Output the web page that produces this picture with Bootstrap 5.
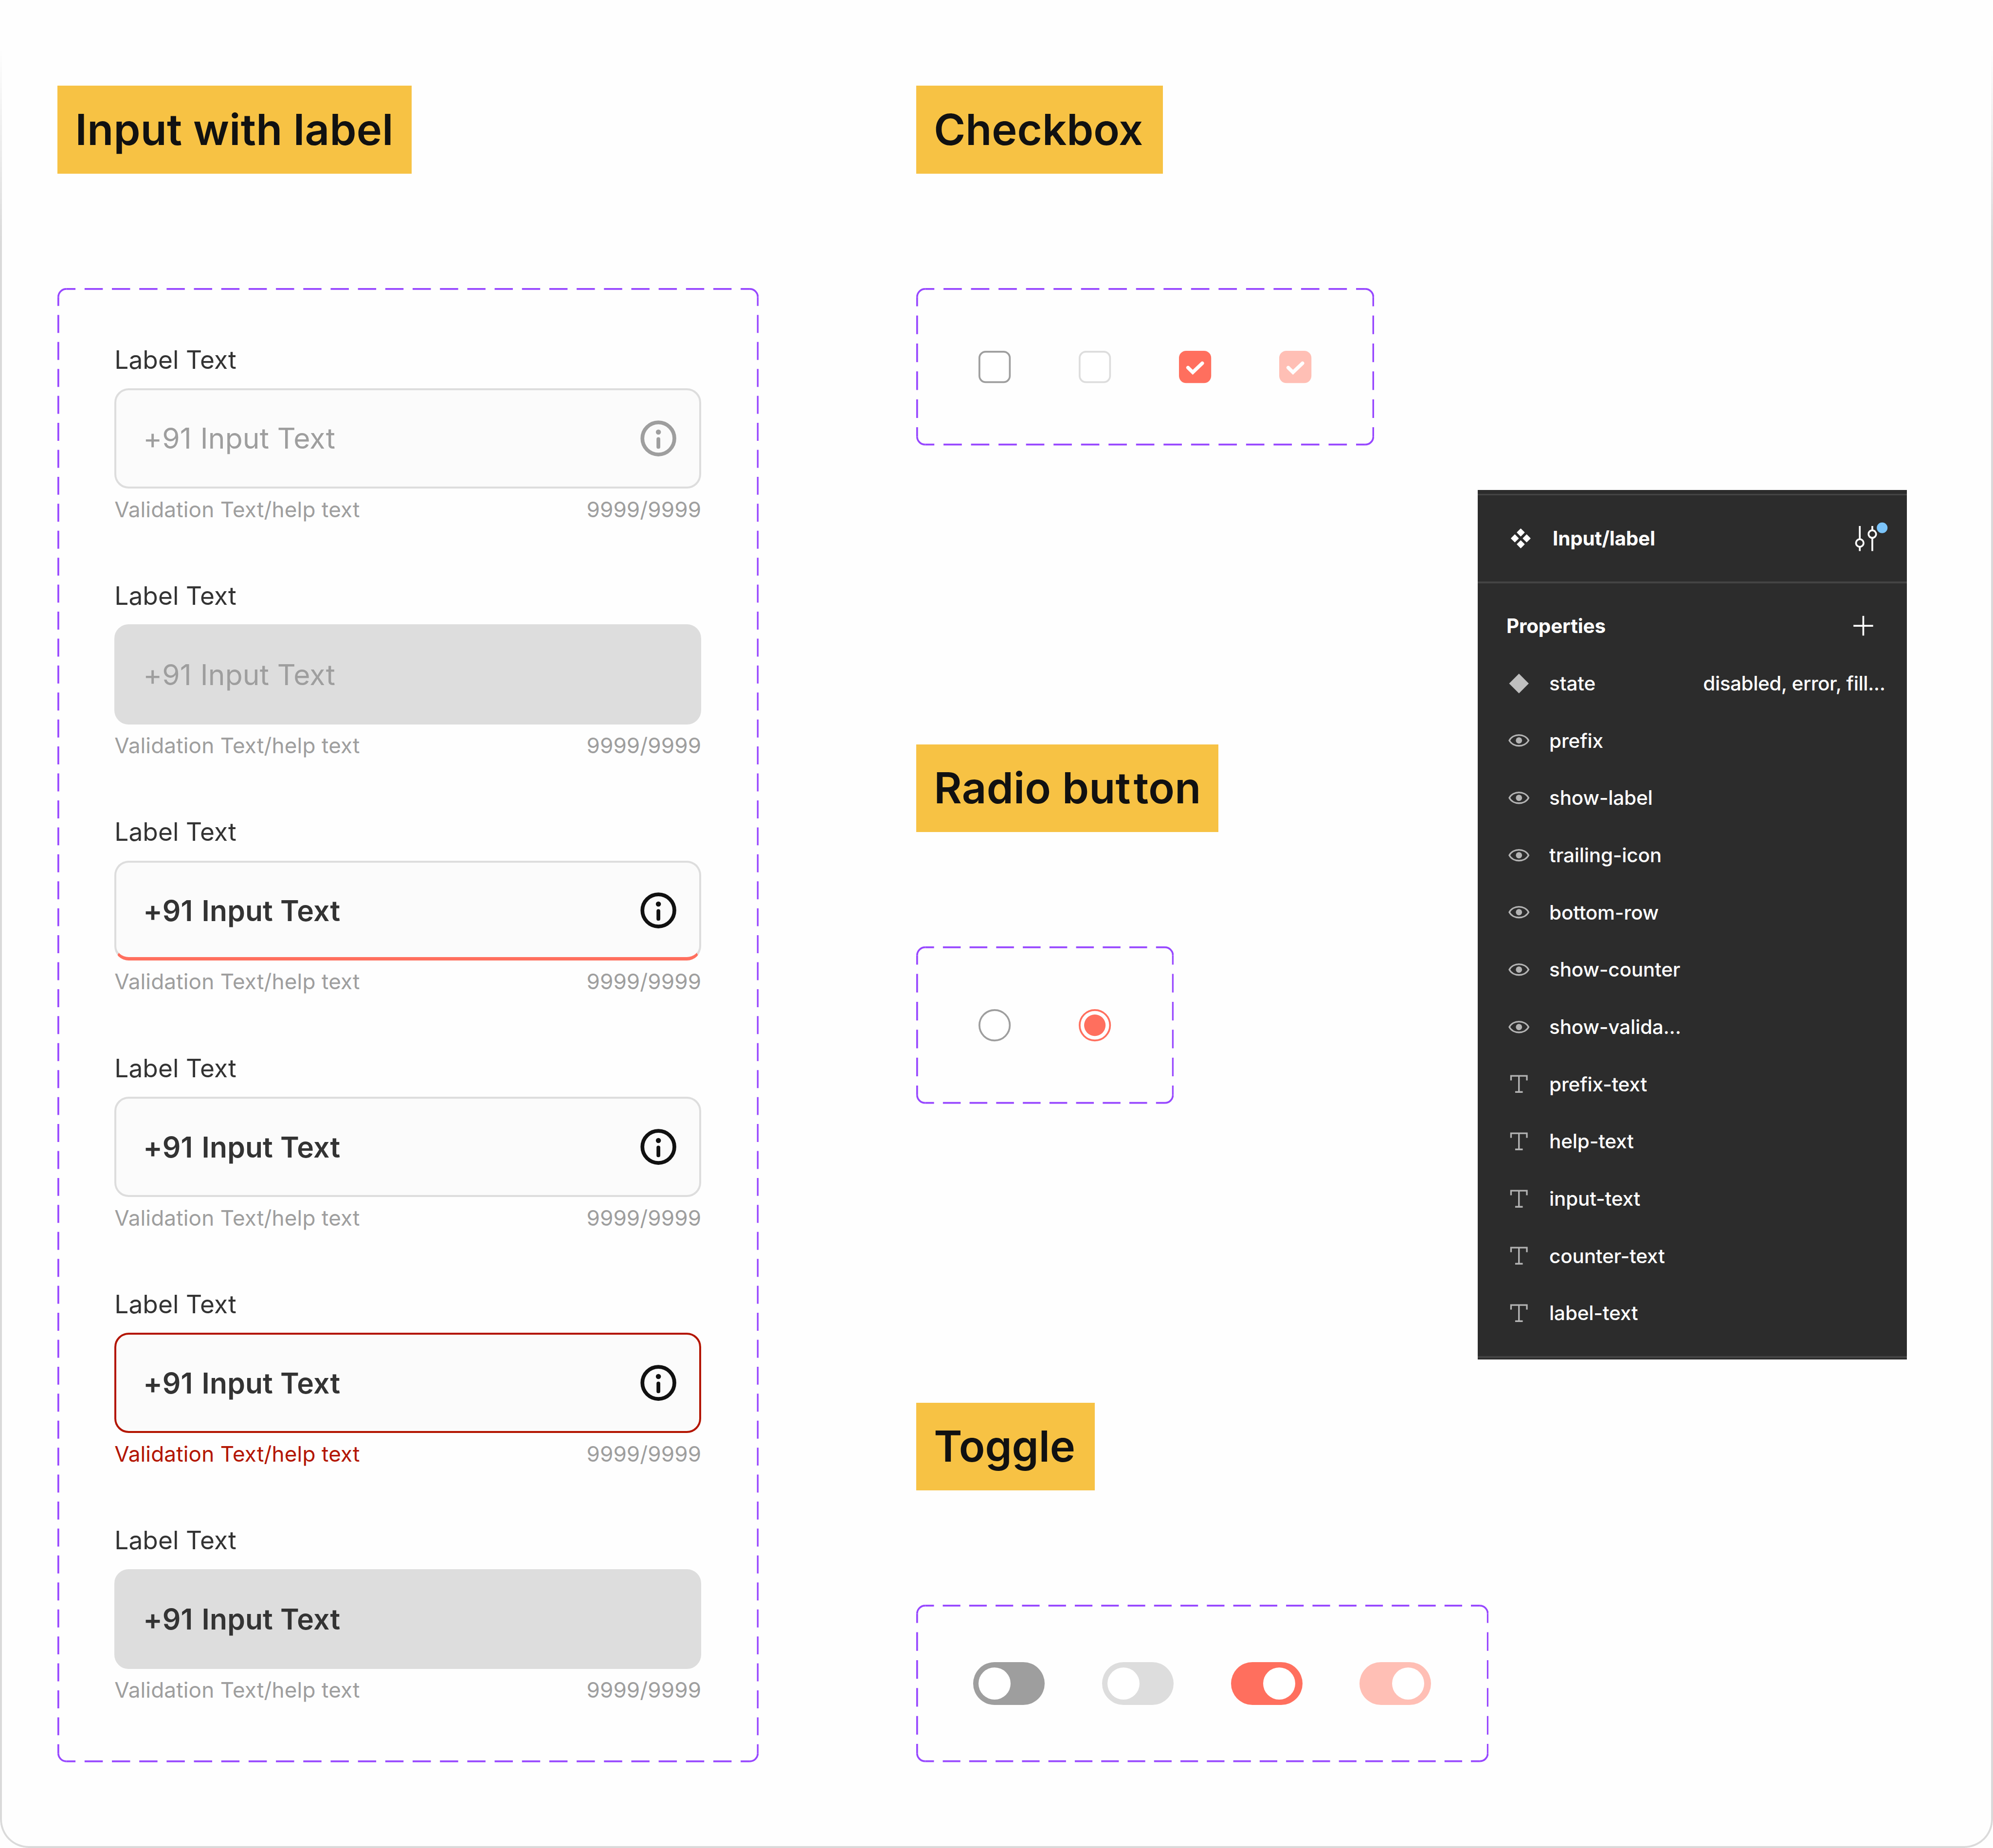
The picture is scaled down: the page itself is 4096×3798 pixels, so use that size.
<!DOCTYPE html>
<html lang="en">
<head>
<meta charset="utf-8">
<title>Form components</title>
<meta name="viewport" content="width=device-width, initial-scale=1">
<link href="https://cdn.jsdelivr.net/npm/bootstrap@5.3.0/dist/css/bootstrap.min.css" rel="stylesheet">
<style>
  /* 1rem = 16 design units, 1 design unit = --u */
  html { font-size: 58.8294px; }
  :root { --u: .0625rem; --hair: 4px; --gray: #9e9e9e; --line: #ddd; --coral: #ff6f5e; --coral-soft: #ffbfb5; --danger: #b31500; --ink: #333; }
  body { font-family: Inter, "Liberation Sans", sans-serif; background: #fefefe; color: var(--ink); line-height: 1; overflow: hidden; font-variant-ligatures: none; }
  .sheet { width: 4096px; height: 3798px; padding: calc(48*var(--u)) 0 0 calc(32*var(--u)); }
  .sheet-edge { position: absolute; inset: 0; border: var(--hair) solid #dadada; border-top: 0; border-radius: 0 0 1rem 1rem; pointer-events: none; -webkit-mask-image: linear-gradient(transparent 100px, #000 500px); mask-image: linear-gradient(transparent 100px, #000 500px); }
  .col-inputs { width: calc(480*var(--u)); }
  .col-controls { width: calc(314*var(--u)); }
  .section { height: calc(368*var(--u)); }
  .section-title { background: #f7c244; color: #111; font-size: 1.5rem; line-height: calc(29*var(--u)); font-weight: 600; padding: calc(10*var(--u)); margin: 0 0 4rem; letter-spacing: 0; white-space: nowrap; }
  .title-input { width: calc(198*var(--u)); letter-spacing: .28px; }
  .title-check { width: calc(138*var(--u)); }
  .title-radio { width: calc(169*var(--u)); letter-spacing: .28px; }
  .title-radio span { letter-spacing: 6px; }
  .title-toggle { width: calc(100*var(--u)); }
  .frame { position: relative; padding: 2rem; flex: none; }
  .frame-dash { position: absolute; inset: 0; width: 100%; height: 100%; fill: none; stroke: #9747ff; stroke-width: 4; }
  .frame-inputs { width: calc(392*var(--u)); height: calc(824*var(--u)); }

  .field { height: calc(100*var(--u)); }
  .field-label { font-size: calc(14*var(--u)); line-height: 1rem; letter-spacing: .02px; margin-bottom: .5rem; }
  .field-box { height: 3.5rem; border: var(--hair) solid var(--line); border-radius: .5rem; background: #fbfbfb; padding: 0 calc(12*var(--u) - var(--hair)) 0 calc(1rem - var(--hair)); color: var(--gray); font-size: 1rem; letter-spacing: calc(.035*var(--u)); gap: calc(4.9*var(--u)); }
  .field-box span { padding-top: calc(.6*var(--u)); }
  .field-box svg { width: 1.5rem; height: 1.5rem; }
  .field-help { font-size: .75rem; line-height: calc(15*var(--u)); margin-top: calc(4.3*var(--u)); color: var(--gray); letter-spacing: calc(.035*var(--u)); }
  .is-filled .field-box { color: var(--ink); font-weight: 600; }
  .is-filled .field-box svg { color: #111; }
  .is-focus .field-box { border-bottom: 7px solid var(--coral); padding-top: 3px; }
  .is-off .field-box { background: var(--line); }
  .is-error .field-box { border-color: var(--danger); }
  .is-error .help-msg { color: var(--danger); }

  .ctl { width: 1.5rem; height: 1.5rem; }
  .ctl-row { gap: 2rem; }
  .switch { width: 2.5rem; height: 1.5rem; border-radius: 1rem; background: var(--gray); padding: calc(3*var(--u)); }
  .switch::before { content: ""; width: calc(18*var(--u)); height: calc(18*var(--u)); border-radius: 50%; background: #fff; }
  .switch.on { background: var(--coral); padding-left: calc(18*var(--u)); }
  .switch.muted { background: var(--line); }
  .switch.on.muted { background: var(--coral-soft); }

  .panel { width: calc(240*var(--u)); height: calc(486*var(--u)); margin-top: calc(226*var(--u)); background: #2c2c2c; color: #fff; font-size: calc(11*var(--u)); font-weight: 450; padding-top: calc(2*var(--u)); letter-spacing: -.18px; }
  .rule { height: calc(1*var(--u)); background: #444; }
  .panel-head { height: 3rem; padding: 0 0 0 1rem; font-weight: 650; }
  .panel-head span { padding-top: calc(.5*var(--u)); }
  .panel-head .comp { width: 1rem; height: 1rem; margin-right: calc(9.9*var(--u)); }
  .panel-head .tune { width: 2rem; height: 2rem; }
  .prop { height: 2rem; padding-left: 1rem; }
  .prop svg { width: calc(14*var(--u)); height: calc(14*var(--u)); margin-right: calc(10*var(--u)); color: #b3b3b3; flex: none; }
  .prop .name { width: calc(86*var(--u)); white-space: nowrap; padding-top: calc(.4*var(--u)); }
  .prop .plus { width: 1rem; height: 1rem; margin: 0 calc(16.5*var(--u)) 0 auto; color: #fff; }
  .prop-head { font-weight: 650; }
  .prop-value { white-space: nowrap; padding-top: calc(.4*var(--u)); letter-spacing: -.42px; }
</style>
</head>
<body>
<svg class="d-none" aria-hidden="true">
  <symbol id="info" viewBox="0 0 24 24"><circle cx="12" cy="12" r="8.95" fill="none" stroke="currentColor" stroke-width="2.1"/><circle cx="12" cy="8.45" r="1.43" fill="currentColor"/><path d="M12 12.35v4.35" fill="none" stroke="currentColor" stroke-width="2.1" stroke-linecap="round"/></symbol>
  <symbol id="eye" viewBox="-28 -28 56 56"><path d="M-21.5 0C-13-16 13-16 21.5 0C13 16-13 16-21.5 0Z" fill="none" stroke="currentColor" stroke-width="3.6"/><circle r="7" fill="currentColor"/></symbol>
  <symbol id="type" viewBox="-28 -28 56 56"><path d="M-17.7-8V-18H17.7V-8M0-18V18M-8.5 18H8.5" fill="none" stroke="currentColor" stroke-width="3.6"/></symbol>
</svg>

<div class="position-relative">
<main class="sheet d-flex align-items-start">

  <section class="col-inputs d-flex flex-column align-items-start">
    <h2 class="section-title title-input">Input with label</h2>
    <div class="frame frame-inputs d-flex flex-column justify-content-between">
      <svg class="frame-dash" viewBox="0 0 1568 3296" preserveAspectRatio="none">
        <path d="M2 20A18 18 0 0 1 20 2M1548 2A18 18 0 0 1 1566 20M1566 3276A18 18 0 0 1 1548 3294M20 3294A18 18 0 0 1 2 3276"/>
        <path d="M20 2H1548M20 3294H1548" stroke-dasharray="40.747 20.373" stroke-dashoffset="20.373"/>
        <path d="M2 20V3276M1566 20V3276" stroke-dasharray="40.197 20.099" stroke-dashoffset="20.099"/>
      </svg>

      <div class="field">
        <div class="field-label">Label Text</div>
        <div class="field-box d-flex align-items-center"><span>+91</span><span>Input Text</span><svg class="ms-auto"><use href="#info"/></svg></div>
        <div class="field-help d-flex justify-content-between"><span class="help-msg">Validation Text/help text</span><span>9999/9999</span></div>
      </div>
      <div class="field is-off">
        <div class="field-label">Label Text</div>
        <div class="field-box d-flex align-items-center"><span>+91</span><span>Input Text</span></div>
        <div class="field-help d-flex justify-content-between"><span class="help-msg">Validation Text/help text</span><span>9999/9999</span></div>
      </div>
      <div class="field is-filled is-focus">
        <div class="field-label">Label Text</div>
        <div class="field-box d-flex align-items-center"><span>+91</span><span>Input Text</span><svg class="ms-auto"><use href="#info"/></svg></div>
        <div class="field-help d-flex justify-content-between"><span class="help-msg">Validation Text/help text</span><span>9999/9999</span></div>
      </div>
      <div class="field is-filled">
        <div class="field-label">Label Text</div>
        <div class="field-box d-flex align-items-center"><span>+91</span><span>Input Text</span><svg class="ms-auto"><use href="#info"/></svg></div>
        <div class="field-help d-flex justify-content-between"><span class="help-msg">Validation Text/help text</span><span>9999/9999</span></div>
      </div>
      <div class="field is-filled is-error">
        <div class="field-label">Label Text</div>
        <div class="field-box d-flex align-items-center"><span>+91</span><span>Input Text</span><svg class="ms-auto"><use href="#info"/></svg></div>
        <div class="field-help d-flex justify-content-between"><span class="help-msg">Validation Text/help text</span><span>9999/9999</span></div>
      </div>
      <div class="field is-filled is-off">
        <div class="field-label">Label Text</div>
        <div class="field-box d-flex align-items-center"><span>+91</span><span>Input Text</span></div>
        <div class="field-help d-flex justify-content-between"><span class="help-msg">Validation Text/help text</span><span>9999/9999</span></div>
      </div>
    </div>
  </section>

  <div class="col-controls d-flex flex-column">
    <section class="section d-flex flex-column align-items-start">
      <h2 class="section-title title-check">Checkbox</h2>
      <div class="frame ctl-row d-flex">
        <svg class="frame-dash" viewBox="0 0 1024 352" preserveAspectRatio="none">
          <path d="M2 20A18 18 0 0 1 20 2M1004 2A18 18 0 0 1 1022 20M1022 332A18 18 0 0 1 1004 350M20 350A18 18 0 0 1 2 332"/>
          <path d="M20 2H1004M20 350H1004" stroke-dasharray="41 20.5" stroke-dashoffset="20.5"/>
          <path d="M2 20V332M1022 20V332" stroke-dasharray="41.6 20.8" stroke-dashoffset="20.8"/>
        </svg>
        <svg class="ctl" viewBox="0 0 24 24"><rect x="3.5" y="3.5" width="17" height="17" rx="3.5" fill="#fff" stroke="#9e9e9e"/></svg>
        <svg class="ctl" viewBox="0 0 24 24"><rect x="3.5" y="3.5" width="17" height="17" rx="3.5" fill="#fff" stroke="#ddd"/></svg>
        <svg class="ctl" viewBox="0 0 24 24"><rect x="3" y="3" width="18" height="18" rx="4" fill="#ff6f5e"/><path d="M8.05 12.4L10.7 15L16 9.95" fill="none" stroke="#fff" stroke-width="2" stroke-linecap="round"/></svg>
        <svg class="ctl" viewBox="0 0 24 24"><rect x="3" y="3" width="18" height="18" rx="4" fill="#ffbfb5"/><path d="M8.05 12.4L10.7 15L16 9.95" fill="none" stroke="#fff" stroke-width="2" stroke-linecap="round"/></svg>
      </div>
    </section>

    <section class="section d-flex flex-column align-items-start">
      <h2 class="section-title title-radio">Radio bu<span>t</span>ton</h2>
      <div class="frame ctl-row d-flex">
        <svg class="frame-dash" viewBox="0 0 576 352" preserveAspectRatio="none">
          <path d="M2 20A18 18 0 0 1 20 2M556 2A18 18 0 0 1 574 20M574 332A18 18 0 0 1 556 350M20 350A18 18 0 0 1 2 332"/>
          <path d="M20 2H556M20 350H556" stroke-dasharray="39.704 19.852" stroke-dashoffset="19.852"/>
          <path d="M2 20V332M574 20V332" stroke-dasharray="41.6 20.8" stroke-dashoffset="20.8"/>
        </svg>
        <svg class="ctl" viewBox="0 0 24 24"><circle cx="12" cy="12" r="8.5" fill="#fff" stroke="#9e9e9e"/></svg>
        <svg class="ctl" viewBox="0 0 24 24"><circle cx="12" cy="12" r="8.5" fill="#fff" stroke="#ff6f5e"/><circle cx="12" cy="12" r="6" fill="#ff6f5e"/></svg>
      </div>
    </section>

    <section class="d-flex flex-column align-items-start">
      <h2 class="section-title title-toggle">Toggle</h2>
      <div class="frame ctl-row d-flex">
        <svg class="frame-dash" viewBox="0 0 1280 352" preserveAspectRatio="none">
          <path d="M2 20A18 18 0 0 1 20 2M1260 2A18 18 0 0 1 1278 20M1278 332A18 18 0 0 1 1260 350M20 350A18 18 0 0 1 2 332"/>
          <path d="M20 2H1260M20 350H1260" stroke-dasharray="39.365 19.683" stroke-dashoffset="19.683"/>
          <path d="M2 20V332M1278 20V332" stroke-dasharray="41.6 20.8" stroke-dashoffset="20.8"/>
        </svg>
        <div class="switch d-flex"></div>
        <div class="switch muted d-flex"></div>
        <div class="switch on d-flex"></div>
        <div class="switch on muted d-flex"></div>
      </div>
    </section>
  </div>

  <aside class="panel">
    <div class="rule"></div>
    <div class="panel-head d-flex align-items-center">
      <svg class="comp" viewBox="-8 -8 16 16" fill="#fff" stroke="#fff" stroke-width=".4" stroke-linejoin="round"><path d="M0-5.3L2-3.3L0-1.3L-2-3.3ZM0 1.3L2 3.3L0 5.3L-2 3.3ZM-3.3-2L-1.3 0L-3.3 2L-5.3 0ZM3.3-2L5.3 0L3.3 2L1.3 0Z"/></svg>
      <span>Input/label</span>
      <svg class="tune ms-auto" viewBox="4136 1140 128 128" fill="none" stroke="#fff" stroke-width="4"><path d="M4158 1176V1205M4158 1223V1232M4186 1176V1185M4186 1203V1232"/><circle cx="4158" cy="1214" r="8.5"/><circle cx="4186" cy="1194" r="8.5"/><circle cx="4208" cy="1180" r="14" fill="#7bc4fa" stroke="#2c2c2c"/></svg>
    </div>
    <div class="rule"></div>
    <div class="py-2">
      <div class="prop prop-head d-flex align-items-center"><span>Properties</span><svg class="plus" viewBox="0 0 16 16"><path d="M8 2.4V13.4M2.5 7.9H13.5" stroke="currentColor" fill="none"/></svg></div>
      <div class="prop d-flex align-items-center"><svg viewBox="-28 -28 56 56"><path d="M0-22L22 0L0 22L-22 0Z" fill="#bfbfbf"/></svg><span class="name">state</span><span class="prop-value">disabled, error, fill...</span></div>
      <div class="prop d-flex align-items-center"><svg><use href="#eye"/></svg><span class="name">prefix</span></div>
      <div class="prop d-flex align-items-center"><svg><use href="#eye"/></svg><span class="name">show-label</span></div>
      <div class="prop d-flex align-items-center"><svg><use href="#eye"/></svg><span class="name">trailing-icon</span></div>
      <div class="prop d-flex align-items-center"><svg><use href="#eye"/></svg><span class="name">bottom-row</span></div>
      <div class="prop d-flex align-items-center"><svg><use href="#eye"/></svg><span class="name">show-counter</span></div>
      <div class="prop d-flex align-items-center"><svg><use href="#eye"/></svg><span class="name">show-valida...</span></div>
      <div class="prop d-flex align-items-center"><svg><use href="#type"/></svg><span class="name">prefix-text</span></div>
      <div class="prop d-flex align-items-center"><svg><use href="#type"/></svg><span class="name">help-text</span></div>
      <div class="prop d-flex align-items-center"><svg><use href="#type"/></svg><span class="name">input-text</span></div>
      <div class="prop d-flex align-items-center"><svg><use href="#type"/></svg><span class="name">counter-text</span></div>
      <div class="prop d-flex align-items-center"><svg><use href="#type"/></svg><span class="name">label-text</span></div>
    </div>
    <div class="rule"></div>
  </aside>

</main>
<div class="sheet-edge"></div>
</div>
<script src="https://cdn.jsdelivr.net/npm/bootstrap@5.3.0/dist/js/bootstrap.bundle.min.js"></script>
</body>
</html>
